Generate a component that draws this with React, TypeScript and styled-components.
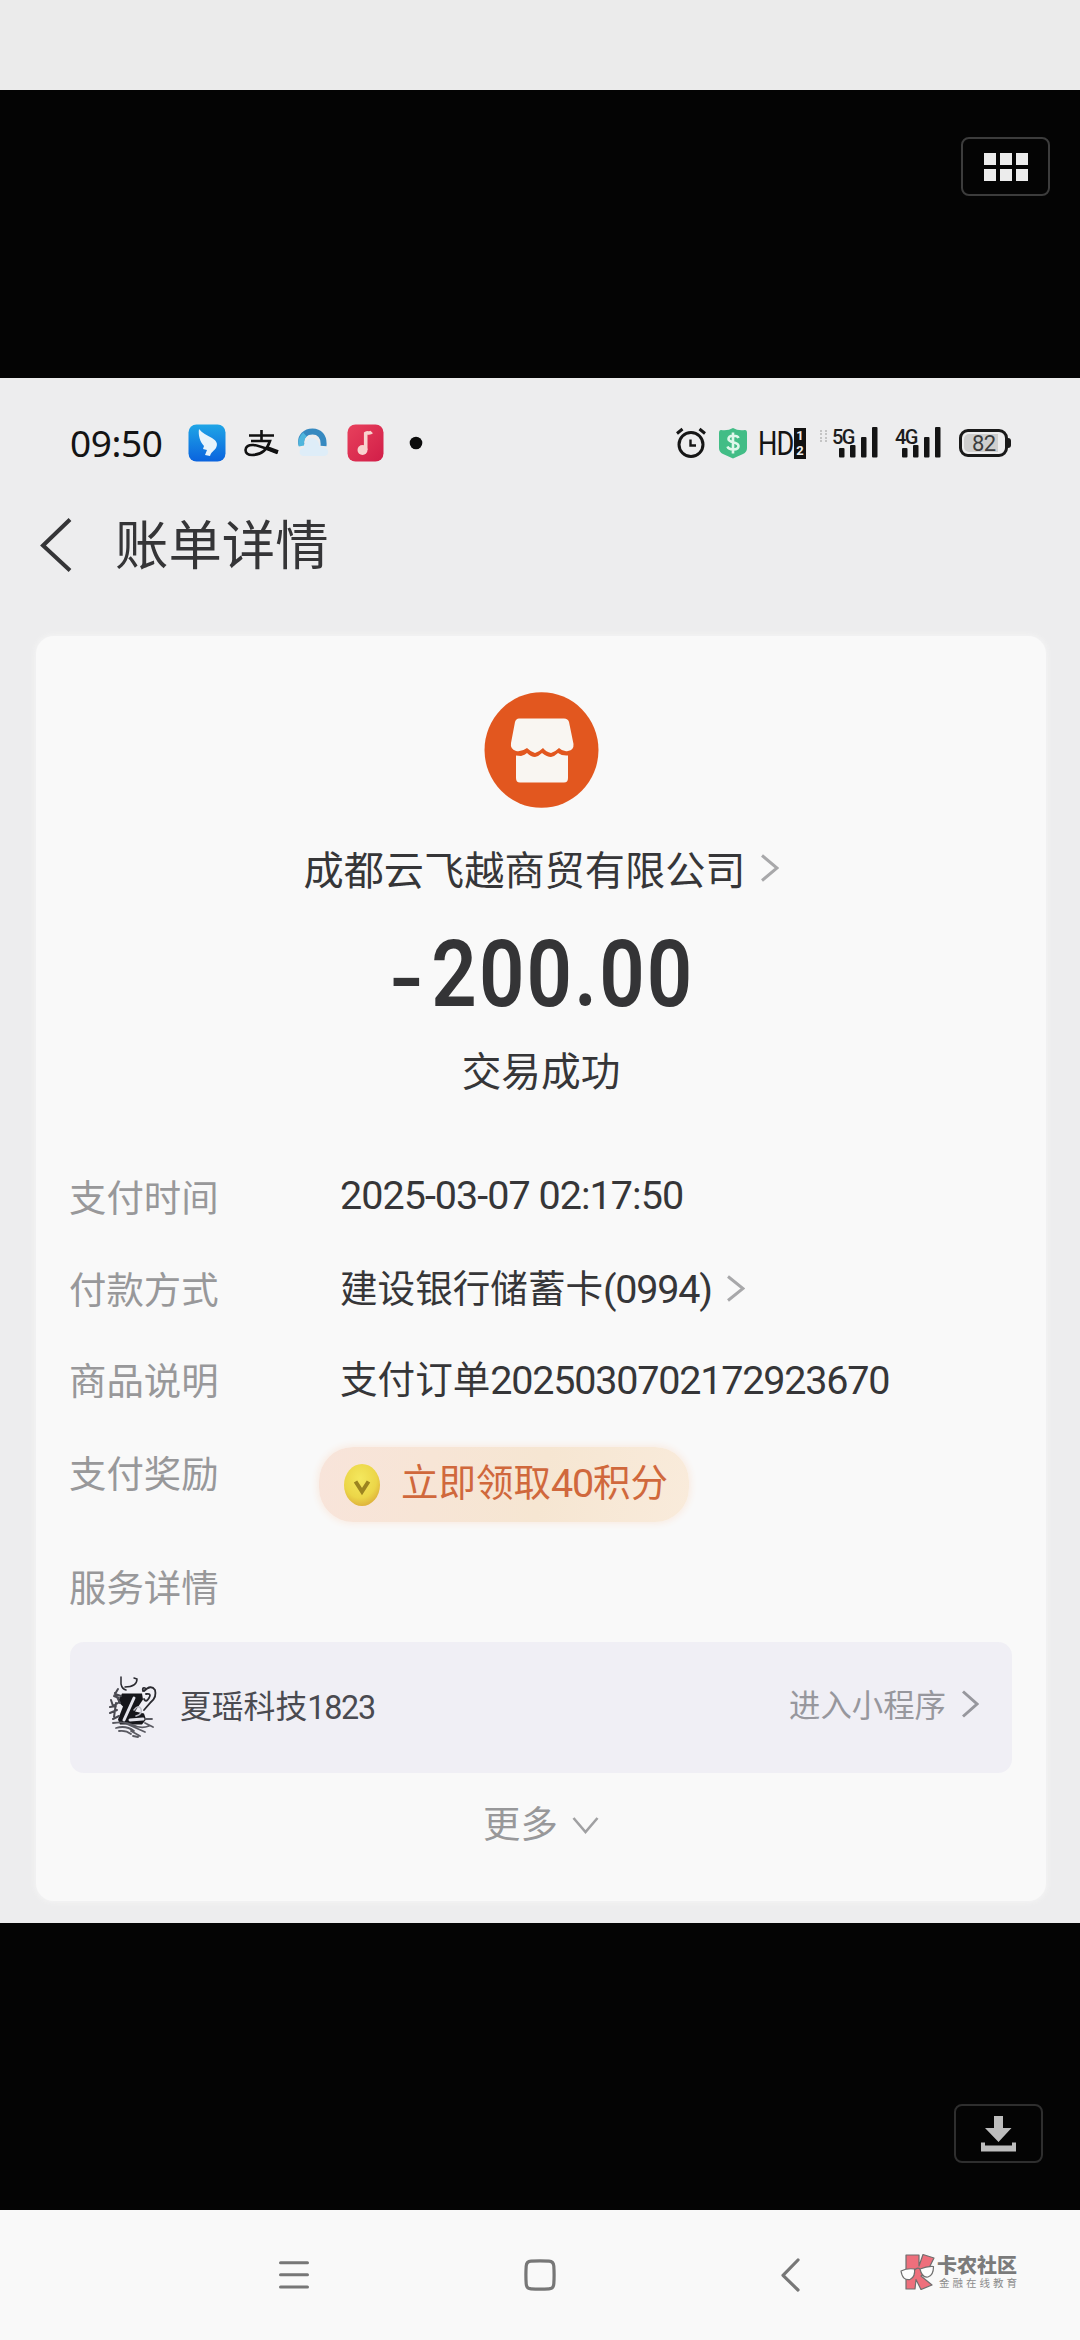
import React from "react";
import styled, { createGlobalStyle } from "styled-components";

const CJK = `"Noto Sans CJK SC", sans-serif`;

const GlobalStyle = createGlobalStyle`
  html, body { margin: 0; padding: 0; background: #f9f9f9; }
  * { box-sizing: border-box; }
  svg { display: block; flex: none; }
`;

const Page = styled.div`
  width: 1080px;
  height: 2340px;
  display: flex;
  flex-direction: column;
  overflow: hidden;
  font-family: Roboto, ${CJK};
  color: #363638;
  white-space: nowrap;
`;

const TopStrip = styled.div`
  height: 90px;
  background: #ebebeb;
`;

const BlackBar = styled.div<{ $h: number; $pad: string }>`
  height: ${(p) => p.$h}px;
  padding: ${(p) => p.$pad};
  background: #040404;
  display: flex;
  justify-content: flex-end;
  align-items: flex-start;
`;

const OverlayButton = styled.div<{ $border: string }>`
  width: 89px;
  height: 59px;
  border: 2px solid ${(p) => p.$border};
  border-radius: 8px;
  display: flex;
  align-items: center;
  justify-content: center;
`;

const Grid = styled.div`
  display: grid;
  grid-template-columns: repeat(3, 12px);
  grid-auto-rows: 12px;
  gap: 4px;
`;

const GridDot = styled.i`
  background: #ececec;
`;

const Screen = styled.main`
  height: 1545px;
  background: #ededee;
  display: flex;
  flex-direction: column;
`;

const StatusBar = styled.div`
  height: 130px;
  padding: 0 72px 0 70px;
  display: flex;
  justify-content: space-between;
  align-items: center;
`;

const StatusGroup = styled.div`
  display: flex;
  align-items: center;
  height: 40px;
`;

const Clock = styled.span`
  width: 118px;
  font: 400 37px/40px "Noto Sans", ${CJK};
  letter-spacing: -0.4px;
  color: #141414;
`;

const Gap = styled.span<{ $w: number }>`
  width: ${(p) => p.$w}px;
  flex: none;
`;

const HdLabel = styled.span`
  width: 36px;
  font: 400 34px/40px Roboto, sans-serif;
  letter-spacing: -1px;
  transform: scaleX(0.8);
  transform-origin: left center;
  color: #141414;
`;

const SimStack = styled.span`
  width: 12px;
  height: 31px;
  background: #111;
  color: #f0f0f0;
  display: flex;
  flex-direction: column;
  align-items: center;
  font: 700 13px/15px Roboto, sans-serif;
`;

const Signal = styled.span`
  position: relative;
  width: 46px;
  height: 32px;
`;

const NetLabel = styled.span`
  position: absolute;
  left: -1px;
  top: 0;
  font: 500 20px/20px Roboto, sans-serif;
  letter-spacing: -1.6px;
  color: #1c1c1c;
`;

const LinkHint = styled.span`
  width: 7px;
  height: 12px;
  margin: -14px 6px 0 0;
  border: 2px dotted #c4c4c4;
`;

const Battery = styled.span`
  position: relative;
  width: 49px;
  height: 28px;
  border: 3px solid #1a1a1a;
  border-radius: 9px;
  display: flex;
  align-items: center;
  padding: 2px;
  &::after {
    content: "";
    position: absolute;
    right: -6px;
    top: 6px;
    width: 4px;
    height: 10px;
    border-radius: 0 3px 3px 0;
    background: #1a1a1a;
  }
`;

const BatteryFill = styled.span`
  width: 34px;
  height: 18px;
  border-radius: 5px 0 0 5px;
  background: #cfcfcf;
  font: 400 22px/19px Roboto, sans-serif;
  color: #3c3c3c;
  padding-left: 8px;
  letter-spacing: -0.5px;
`;

const TitleBar = styled.header`
  height: 128px;
  padding: 0 0 54px 40px;
  display: flex;
  align-items: center;
`;

const Title = styled.h1`
  margin: -6px 0 0 43px;
  font: 400 53.4px/74px ${CJK};
  color: #353537;
`;

const Card = styled.section`
  margin: 0 34px 0 36px;
  height: 1265px;
  border-radius: 18px;
  background: #f9f9f9;
  box-shadow: 0 0 5px 1px #f5f5f5;
  padding: 56px 34px 0 34px;
  display: flex;
  flex-direction: column;
`;

const Summary = styled.div`
  display: flex;
  flex-direction: column;
  align-items: center;
`;

const Merchant = styled.div`
  margin-top: 35px;
  height: 50px;
  display: flex;
  align-items: center;
  gap: 14px;
  font: 400 40.2px/50px ${CJK};
`;

const Amount = styled.div`
  margin-top: 28px;
  height: 108px;
  display: flex;
  font: 600 93px/108px Roboto, sans-serif;
  letter-spacing: 2.6px;
  transform: scaleX(0.856);
  color: #343436;
`;

const Minus = styled.span`
  margin: 5px 9px 0 5px;
  transform: scale(1.2, 0.86);
`;

const Status = styled.div`
  margin-top: 15px;
  height: 50px;
  font: 400 39.7px/50px ${CJK};
`;

const Details = styled.div`
  margin-top: 77px;
  display: flex;
  flex-direction: column;
`;

const Row = styled.div<{ $h: number }>`
  height: ${(p) => p.$h}px;
  display: flex;
  align-items: flex-start;
`;

const Label = styled.span`
  width: 271px;
  margin-left: -1px;
  font: 400 37.4px/50px ${CJK};
  color: #98989a;
`;

const Value = styled.span`
  height: 50px;
  display: flex;
  align-items: center;
  font: 400 37.6px/50px ${CJK};
`;

const Num = styled.span<{ $s?: number; $ls?: number }>`
  font-family: Roboto, sans-serif;
  font-size: ${(p) => p.$s ?? 39.5}px;
  letter-spacing: ${(p) => p.$ls ?? -1.2}px;
  vertical-align: -1px;
`;

const Reward = styled.span`
  margin: 0 0 0 -21px;
  width: 370px;
  height: 75px;
  border-radius: 34px;
  background: linear-gradient(100deg, #f8e4da, #f6e6d2 60%, #f9ebdb);
  box-shadow: 0 0 6px 2px #f9ece3;
  display: flex;
  align-items: center;
  padding-left: 24px;
  gap: 20px;
  font: 400 37.5px/50px ${CJK};
  color: #d0683c;
`;

const RewardText = styled.span`
  padding-bottom: 5px;
`;

const Service = styled.div`
  height: 131px;
  border-radius: 14px;
  background: #f0eff5;
  padding: 0 33px 0 38px;
  display: flex;
  align-items: center;
  font: 400 31.8px/44px ${CJK};
`;

const ServiceName = styled.span`
  flex: 1;
  margin-left: 20px;
  padding-bottom: 3px;
  color: #4a4a50;
`;

const EnterLink = styled.span`
  display: flex;
  align-items: center;
  gap: 15px;
  padding-bottom: 7px;
  font-size: 31.4px;
  color: #97979d;
`;

const More = styled.div`
  margin-top: 24px;
  height: 50px;
  display: flex;
  align-items: center;
  justify-content: center;
  gap: 14px;
  font: 400 37.4px/50px ${CJK};
  color: #98989a;
  svg {
    margin-top: 6px;
  }
`;

const NavBar = styled.nav`
  height: 130px;
  background: #f9f9f9;
  display: flex;
  align-items: center;
  padding-left: 278px;
`;

const Brand = styled.div`
  display: flex;
  align-items: center;
  margin: -7px 0 0 100px;
  gap: 2px;
`;

const BrandText = styled.div`
  display: flex;
  flex-direction: column;
  color: #7b7b7b;
`;

const BrandName = styled.span`
  font: 900 20px/22px ${CJK};
`;

const BrandSub = styled.span`
  margin-left: 2px;
  font: 400 10.5px/14px ${CJK};
  letter-spacing: 3px;
  color: #8c8c8c;
`;

const Chevron = ({ w, h, color, sw = 3 }: { w: number; h: number; color: string; sw?: number }) => (
  <svg width={w} height={h} viewBox={`0 0 ${w} ${h}`} fill="none" stroke={color} strokeWidth={sw}>
    <path d={`M2 1.5L${w - 2} ${h / 2}L2 ${h - 1.5}`} />
  </svg>
);

const BirdApp = () => (
  <svg width="38" height="38" viewBox="0 0 38 38">
    <defs>
      <linearGradient id="bird" x1="0" y1="0" x2="0" y2="1">
        <stop offset="0" stopColor="#1fa5e6" />
        <stop offset="1" stopColor="#0a63de" />
      </linearGradient>
    </defs>
    <rect x="0.5" y="0.5" width="37" height="37" rx="8" fill="url(#bird)" />
    <path d="M11 5c3 4 8 6 13 9 5 3 6 6 4 10-2 3-5 4-6 8l-5-1 2-5-4-1 1-3c-4-4-6-11-5-17z" fill="#e8f4fb" />
  </svg>
);

const AlipayMark = () => (
  <svg width="35" height="27" viewBox="0 0 35 27" fill="none" stroke="#111" strokeWidth="2.6">
    <path d="M5 5.500h25M17.500 0v11M7 11h19c-2 6-7 14-18 14-4 0-6.500-2-6.500-5s3-5.500 8-5c7 .6 14 4.500 24 8" />
    <path d="M22 17.500l12 4.500" strokeWidth="4" />
  </svg>
);

const CloudApp = () => (
  <svg width="34" height="34" viewBox="0 0 34 34">
    <path d="M4.500 19C2.500 10 9 5.500 15.500 5.500S27.500 10 26.500 20" fill="none" stroke="#3689c0" strokeWidth="6" />
    <path d="M4.500 20C3.500 15 5 11 8 8.500" fill="none" stroke="#4fb6dd" strokeWidth="5.500" />
    <path d="M7 30c-6 0-6-8 0-8 1-7 4-10 8-10 5 0 7 4 8 9 9-1 11 8 4 9z" fill="#deedf8" />
  </svg>
);

const MusicApp = () => (
  <svg width="37" height="38" viewBox="0 0 37 38">
    <defs>
      <linearGradient id="music" x1="0" y1="0" x2="1" y2="1">
        <stop offset="0" stopColor="#e8405c" />
        <stop offset="1" stopColor="#d11e48" />
      </linearGradient>
    </defs>
    <rect x="0.500" y="0.500" width="36" height="37" rx="8" fill="url(#music)" />
    <ellipse cx="15.500" cy="26" rx="5" ry="5" fill="#f8d3cf" />
    <path d="M18.700 26V9.500c2-1.500 4 .5 6-1.500" fill="none" stroke="#f8d3cf" strokeWidth="3.600" />
  </svg>
);

const Alarm = () => (
  <svg width="30" height="32" viewBox="0 0 30 32" fill="none" stroke="#161616" strokeWidth="3">
    <circle cx="15" cy="17.500" r="12" />
    <path d="M14.500 12.500v6h5.500" strokeWidth="2.400" />
    <path d="M1 6.500L6.500 2M29 6.500L23.500 2" />
  </svg>
);

const Shield = () => (
  <svg width="28" height="32" viewBox="0 0 28 32">
    <path d="M2 3Q9 4 14 1Q19 4 26 3Q28 3 28 6V21Q28 25 24 27L14 31.500L4 27Q0 25 0 21V6Q0 3 2 3z" fill="#42bd86" />
    <path d="M19.500 11c-1-3-10-3.500-10 1 0 4 10 2.500 10 7 0 4.500-9.500 4.500-11 .5M14 5.500v21" fill="none" stroke="#dff7ea" strokeWidth="2.600" />
  </svg>
);

const Bars = () => (
  <svg width="46" height="32" viewBox="0 0 46 32" fill="#141414">
    <rect x="6" y="21" width="5.500" height="9.500" rx="1" />
    <rect x="17" y="18" width="5.500" height="12.500" rx="1" />
    <rect x="28" y="10" width="5.500" height="20.500" rx="1" />
    <rect x="39" y="0" width="5.500" height="30.500" rx="1" />
  </svg>
);

const StoreIcon = () => (
  <svg width="115" height="116" viewBox="0 0 115 116">
    <ellipse cx="57.500" cy="58" rx="57" ry="57.800" fill="#e2571f" />
    <path
      d="M35 26.500H80Q84 26.500 85 30L89.500 52Q90 58 84 59Q79 60 75 56Q71 60 67 61Q62 60 59 56Q55 60 51 61Q47 60 43 56Q38 60 32 59Q26 57 27 51L31 30Q32 26.500 35 26.500z"
      fill="#f9f6f2"
    />
    <path d="M32 63.500L37 64Q41 63 43 61Q47 65 51 65Q55 64 58 61Q63 65 67 65Q71 64 74 61Q78 64 84 63.500V86Q84 90.500 80 90.500H36Q32 90.500 32 86z" fill="#f9f6f2" />
  </svg>
);

const Coin = () => (
  <svg width="38" height="44" viewBox="0 0 38 44">
    <defs>
      <radialGradient id="coin" cx="0.450" cy="0.350" r="0.650">
        <stop offset="0" stopColor="#f4e85e" />
        <stop offset="0.700" stopColor="#ecd648" />
        <stop offset="1" stopColor="#dfb43c" />
      </radialGradient>
    </defs>
    <ellipse cx="19" cy="22" rx="18" ry="21" fill="url(#coin)" />
    <path d="M12.500 18.500l6.500 10 6.500-10" fill="none" stroke="#9c8420" strokeWidth="4" />
  </svg>
);

const InkLogo = () => (
  <svg width="52" height="68" viewBox="0 0 52 68" fill="none" stroke="#2a2a30" strokeLinecap="round">
    <path d="M14 19.500h20l1 6-8 12 9 2 2 6-4 5H12l-2-5 5-13-5-5z" fill="#16161b" stroke="none" />
    <path d="M26 24L16 46M22 46l13-1" stroke="#e4e4ec" strokeWidth="3" />
    <path d="M26 36q5-6 7-1t-5 7" stroke="#bcbcc6" strokeWidth="1.500" />
    <path d="M13 3v7q1 5 5 6M17 13q12 0 12-8l-3-1" strokeWidth="1.500" />
    <path d="M36 17q7-7 11-1 2 7-4 12l-7 8M37 14q-3-1-2 3M38 20q6-1 3 4t-5 1" strokeWidth="1.800" />
    <path d="M10 15l-3 5 6 2M6 22l5 2M3 26l2 6 5-3M2 33l6-1M2 39l7-3M5 45l6-3M8 29l-2 14M7 19l5 10" strokeWidth="2" stroke="#4a4a52" />
    <path d="M5 49q12-2 20 2t16 1M8 54q10-3 18 3M11 57q7-1 12 3M19 50q9 4 18 8M38 45l6 0M37 49l8 4M23 57l9 5M25 62l5 1" strokeWidth="1.800" stroke="#5a5a62" />
  </svg>
);

const DownloadIcon = () => (
  <svg width="36" height="36" viewBox="0 0 36 36" fill="#bdbdbd">
    <path d="M13 0h9v12h8.500L17.500 26 4 12h9z" />
    <path d="M0 26.500h4v3h27v-3h4v9H0z" />
  </svg>
);

const BrandLogo = () => (
  <svg width="35" height="37" viewBox="0 0 35 37" stroke="#6f6f6f" strokeWidth="1.200" strokeLinejoin="round">
    <path d="M6 2h13v11l4-11.500 11 3.500-7 14-6 4 11 9-11 4.500-5-10-1 9.500H6z" fill="#ee6f7c" />
    <path d="M1 18q6-3 13.500-2 1 8-4.500 10.500Q2.500 28 1 18zM20 16q7-3 13.500-2.500 0 9-5.500 10.500-6 1-8-8z" fill="#fdfdfd" />
    <path d="M14.500 17q3-3 5.500-1" fill="none" />
  </svg>
);

export default function App() {
  return (
    <Page>
      <GlobalStyle />
      <TopStrip />
      <BlackBar $h={288} $pad="47px 30px 0 0">
        <OverlayButton $border="#3c3c3c">
          <Grid>
            {[0, 1, 2, 3, 4, 5].map((i) => (
              <GridDot key={i} />
            ))}
          </Grid>
        </OverlayButton>
      </BlackBar>

      <Screen>
        <StatusBar>
          <StatusGroup>
            <Clock>09:50</Clock>
            <BirdApp />
            <Gap $w={18} />
            <AlipayMark />
            <Gap $w={18} />
            <CloudApp />
            <Gap $w={16} />
            <MusicApp />
            <Gap $w={25} />
            <svg width="14" height="14" viewBox="0 0 14 14">
              <circle cx="7" cy="7" r="6.300" fill="#0c0c0c" />
            </svg>
          </StatusGroup>
          <StatusGroup>
            <Alarm />
            <Gap $w={13} />
            <Shield />
            <Gap $w={11} />
            <HdLabel>HD</HdLabel>
            <SimStack>
              <span>1</span>
              <span>2</span>
            </SimStack>
            <Gap $w={14} />
            <LinkHint />
            <Signal>
              <Bars />
              <NetLabel>5G</NetLabel>
            </Signal>
            <Gap $w={17} />
            <Signal>
              <Bars />
              <NetLabel>4G</NetLabel>
            </Signal>
            <Gap $w={17} />
            <Battery>
              <BatteryFill>82</BatteryFill>
            </Battery>
          </StatusGroup>
        </StatusBar>

        <TitleBar>
          <svg width="32" height="54" viewBox="0 0 32 54" fill="none" stroke="#353537" strokeWidth="4">
            <path d="M30 1.500L3 27.500L30 52.500" />
          </svg>
          <Title>账单详情</Title>
        </TitleBar>

        <Card>
          <Summary>
            <StoreIcon />
            <Merchant>
              成都云飞越商贸有限公司
              <Chevron w={19} h={28} color="#a8a8aa" />
            </Merchant>
            <Amount>
              <Minus>-</Minus>200.00
            </Amount>
            <Status>交易成功</Status>
          </Summary>

          <Details>
            <Row $h={92}>
              <Label>支付时间</Label>
              <Value>
                <Num $ls={-0.97}>2025-03-07 02:17:50</Num>
              </Value>
            </Row>
            <Row $h={91}>
              <Label>付款方式</Label>
              <Value>
                <span>
                  建设银行储蓄卡<Num>(0994)</Num>
                </span>
                <Gap $w={14} />
                <Chevron w={19} h={27} color="#a8a8aa" />
              </Value>
            </Row>
            <Row $h={93}>
              <Label>商品说明</Label>
              <Value>
                <span>
                  支付订单<Num>2025030702172923670</Num>
                </span>
              </Value>
            </Row>
            <Row $h={114}>
              <Label>支付奖励</Label>
              <Reward>
                <Coin />
                <RewardText>
                  立即领取<Num>40</Num>积分
                </RewardText>
              </Reward>
            </Row>
            <Row $h={81}>
              <Label>服务详情</Label>
            </Row>
          </Details>

          <Service>
            <InkLogo />
            <ServiceName>
              夏瑶科技<Num $s={32.3}>1823</Num>
            </ServiceName>
            <EnterLink>
              进入小程序
              <Chevron w={18} h={28} color="#97979d" />
            </EnterLink>
          </Service>

          <More>
            更多
            <svg width="27" height="18" viewBox="0 0 27 18" fill="none" stroke="#a0a0a2" strokeWidth="2.600">
              <path d="M1.500 2L13.500 16L25.500 2" />
            </svg>
          </More>
        </Card>
      </Screen>

      <BlackBar $h={287} $pad="181px 37px 0 0">
        <OverlayButton $border="#2e2e2e">
          <DownloadIcon />
        </OverlayButton>
      </BlackBar>

      <NavBar>
        <svg width="32" height="30" viewBox="0 0 32 30" stroke="#777" strokeWidth="3" strokeLinecap="round">
          <path d="M2.500 2.700h27M2.500 14.800h27M2.500 26.900h27" />
        </svg>
        <Gap $w={214} />
        <svg width="32" height="32" viewBox="0 0 32 32" fill="none" stroke="#777" strokeWidth="3.200">
          <path d="M7 2.200Q16 1.400 25 2.200Q29.500 2.500 29.800 7Q30.400 16 29.800 25Q29.500 29.500 25 29.800Q16 30.600 7 29.800Q2.500 29.500 2.200 25Q1.600 16 2.200 7Q2.500 2.500 7 2.200z" />
        </svg>
        <Gap $w={224} />
        <svg width="20" height="34" viewBox="0 0 20 34" fill="none" stroke="#777" strokeWidth="3.200" strokeLinecap="round" strokeLinejoin="round">
          <path d="M18 2L3 17.300L18 32" />
        </svg>
        <Brand>
          <BrandLogo />
          <BrandText>
            <BrandName>卡农社区</BrandName>
            <BrandSub>金融在线教育</BrandSub>
          </BrandText>
        </Brand>
      </NavBar>
    </Page>
  );
}
